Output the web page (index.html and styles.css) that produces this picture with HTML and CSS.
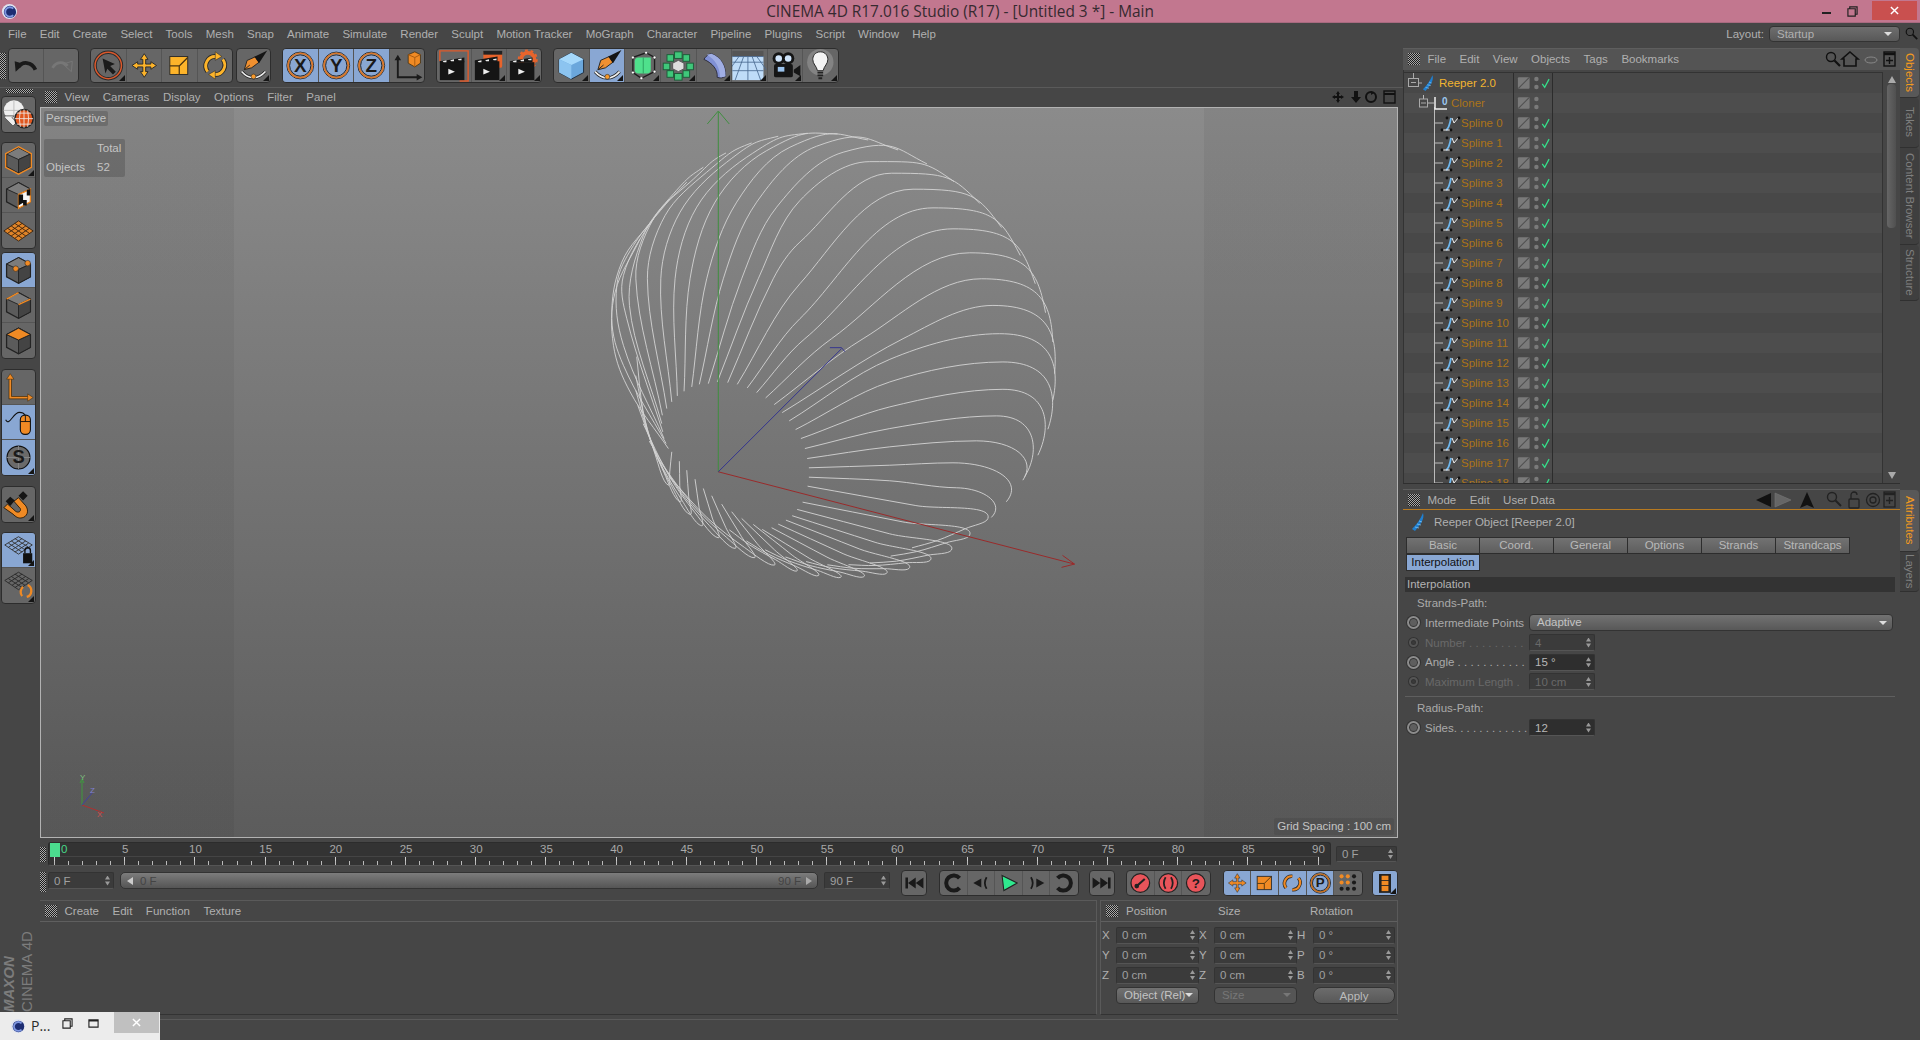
FILE: index.html
```html
<!DOCTYPE html>
<html lang="en">
<head>
<meta charset="utf-8">
<title>CINEMA 4D</title>
<link rel="stylesheet" href="styles.css">
</head>
<body>
<svg class="defs" aria-hidden="true">
<defs>
<symbol id="logo" viewBox="0 0 18 18"><circle cx="9" cy="9" r="8" fill="#dfe4f2"/><circle cx="9.5" cy="9.5" r="6.5" fill="#1d2d72"/><path d="M13 6a5 5 0 1 0 0 7" fill="none" stroke="#7f97e0" stroke-width="2"/></symbol>
<symbol id="undo" viewBox="0 0 36 35"><path d="M7 24 6 13l10 3z" fill="#1a1a1a"/><path d="M10 19c4-6 14-6 18 3" fill="none" stroke="#1a1a1a" stroke-width="4"/></symbol>
<symbol id="redo" viewBox="0 0 36 35"><path d="M29 24l1-11-10 3z" fill="none" stroke="#777"/><path d="M25 18c-4-5-12-5-16 2" fill="none" stroke="#777" stroke-width="3"/></symbol>
<symbol id="sel" viewBox="0 0 36 35"><circle cx="18" cy="17.5" r="14" fill="none" stroke="#2a2a2a" stroke-width="3.6"/><circle cx="18" cy="17.5" r="14" fill="none" stroke="#d9582c" stroke-width="1.6"/><path d="M12 10l13 6-5 2 6 6-3 3-6-6-2 5z" fill="#1a1a1a"/></symbol>
<symbol id="mov" viewBox="0 0 36 35"><path d="M18 5l4 6h-2.500v5H25v-2.500l6 4-6 4V19h-5.500v5H22l-4 6-4-6h2.500v-5H11v2.500l-6-4 6-4V16h5.500v-5H14z" fill="#fdb42a" stroke="#2a2a2a" stroke-width="1"/></symbol>
<symbol id="scl" viewBox="0 0 36 35"><rect x="8" y="8" width="19" height="19" fill="#fdb42a" stroke="#2a2a2a"/><path d="M8 18h10v9M18 18l9-9" fill="none" stroke="#4a3410" stroke-width="1.300"/></symbol>
<symbol id="rot" viewBox="0 0 36 35"><g fill="none" stroke="#2a2a2a" stroke-width="5"><path d="M10 24a10 10 0 0 1 9-16"/><path d="M26 11a10 10 0 0 1-9 16"/></g><g fill="none" stroke="#fdb42a" stroke-width="3"><path d="M10 24a10 10 0 0 1 9-16"/><path d="M26 11a10 10 0 0 1-9 16"/></g><path d="M18 3l7 5-7 4zM18 32l-7-5 7-4z" fill="#fdb42a" stroke="#2a2a2a" stroke-width=".6"/></symbol>
<symbol id="pen" viewBox="0 0 36 35"><path d="M5 24c8 9 18 9 26 0" fill="none" stroke="#222" stroke-width="3.400"/><path d="M5 24c8 9 18 9 26 0" fill="none" stroke="#eee" stroke-width="1.800"/><circle cx="18" cy="29.500" r="2.600" fill="#f79a2c" stroke="#222" stroke-width=".6"/><path d="M8 22 11 12l9-4 4 6-8 6z" fill="#f09030" stroke="#222"/><path d="M8 22l6-5" stroke="#222"/><path d="M19 8l14-7-9 14z" fill="#151515"/></symbol>
<symbol id="lx" viewBox="0 0 36 35"><circle cx="18" cy="17.500" r="14.200" fill="none" stroke="#222"/><circle cx="18" cy="17.500" r="12.800" fill="none" stroke="#d9782a" stroke-width="2"/><circle cx="18" cy="17.500" r="11.300" fill="none" stroke="#222"/><text x="18" y="24" class="big">X</text></symbol>
<symbol id="ly" viewBox="0 0 36 35"><circle cx="18" cy="17.500" r="14.200" fill="none" stroke="#222"/><circle cx="18" cy="17.500" r="12.800" fill="none" stroke="#d9782a" stroke-width="2"/><circle cx="18" cy="17.500" r="11.300" fill="none" stroke="#222"/><text x="18" y="24" class="big">Y</text></symbol>
<symbol id="lz" viewBox="0 0 36 35"><circle cx="18" cy="17.500" r="14.200" fill="none" stroke="#222"/><circle cx="18" cy="17.500" r="12.800" fill="none" stroke="#d9782a" stroke-width="2"/><circle cx="18" cy="17.500" r="11.300" fill="none" stroke="#222"/><text x="18" y="24" class="big">Z</text></symbol>
<symbol id="crd" viewBox="0 0 36 35"><path d="M8 10v20h22" fill="none" stroke="#1a1a1a" stroke-width="2"/><path d="M8 6l3.500 6h-7zM34 30l-6-3.500v7z" fill="#1a1a1a"/><path d="M26 3l6 3v9l-6 4-7-4V6z" fill="#f08a24" stroke="#3a2a10" stroke-width=".8"/><path d="M19 6l7 3 6-3M26 9v10" fill="none" stroke="#a85a10"/></symbol>
<symbol id="rv" viewBox="0 0 36 35"><path d="M3 13V2h30v32h-9" fill="none" stroke="#e05a2a" stroke-width="1.500"/><rect x="3" y="13" width="26" height="20" fill="#151515"/><path d="M3 13 29 9v5H3z" fill="#151515"/><path d="M6 13l4-1v2H7zM14 12l4-1v2h-3zM22 11l4-1v2h-3z" fill="#eee"/><path d="M12 21l7 3-7 3z" fill="#eee"/></symbol>
<symbol id="rp" viewBox="0 0 36 35"><rect x="12" y="2" width="20" height="18" rx="2" fill="#e8642c"/><rect x="12" y="2" width="20" height="4" fill="#222"/><rect x="3" y="13" width="26" height="20" fill="#151515"/><path d="M3 12 27 8v6H3z" fill="#151515"/><path d="M6 13l4-1v2H7zM14 12l4-1v2h-3zM22 11l4-1v2h-3z" fill="#eee"/><path d="M12 21l7 3-7 3z" fill="#eee"/></symbol>
<symbol id="rs" viewBox="0 0 36 35"><circle cx="22" cy="11" r="7" fill="none" stroke="#e8642c" stroke-width="4"/><circle cx="22" cy="11" r="9.600" fill="none" stroke="#e8642c" stroke-width="2" stroke-dasharray="3 3"/><rect x="3" y="14" width="26" height="19" fill="#151515"/><path d="M3 13 27 9v5H3z" fill="#151515"/><path d="M6 13l4-1v2H7zM14 12l4-1v2h-3zM22 11l4-1v2h-3z" fill="#eee"/><path d="M12 21l7 3-7 3z" fill="#eee"/></symbol>
<symbol id="bcube" viewBox="0 0 36 35"><path d="M18 4l13 7v14l-13 7-13-7V11z" fill="#6ba7dc" stroke="#1f2d3d"/><path d="M18 4l13 7-13 6-13-6z" fill="#a5d8fb"/><path d="M5 11l13 6v15l-13-7z" fill="#8cc4f0"/></symbol>
<symbol id="gcube" viewBox="0 0 36 35"><path d="M8 9l14-5 9 5v15l-14 7-9-6z" fill="none" stroke="#1d1d1d" stroke-width="1.400"/><path d="M10 13q0-4 4-4h13v13q0 4-4 4H14q-4 0-4-4z" fill="#4fe08c"/><path d="M19 9v17" stroke="#2aa060"/><g fill="#fff" stroke="#222" stroke-width=".5"><circle cx="8" cy="9" r="1.500"/><circle cx="22" cy="4" r="1.500"/><circle cx="31" cy="9" r="1.500"/><circle cx="31" cy="24" r="1.500"/><circle cx="17" cy="31" r="1.500"/><circle cx="8" cy="25" r="1.500"/></g></symbol>
<symbol id="clon" viewBox="0 0 36 35"><g fill="#3fc77a" stroke="#1d5a38"><rect x="14" y="3" width="8" height="7"/><rect x="23" y="6" width="7" height="7"/><rect x="27" y="15" width="7" height="7"/><rect x="23" y="23" width="7" height="7"/><rect x="14" y="26" width="8" height="7"/><rect x="6" y="23" width="7" height="7"/><rect x="2" y="15" width="7" height="7"/><rect x="6" y="6" width="7" height="7"/></g><path d="M18 12l6 3v6l-6 3-6-3v-6z" fill="#ddd" stroke="#555"/></symbol>
<symbol id="bent" viewBox="0 0 36 35"><path d="M7 11c3-5 7-6 8-6 10 4 15 12 15 24-3 2-6 2-9 1 1-8-5-15-14-19z" fill="#8090d4" stroke="#2a2a3a"/><path d="M15 5c10 4 15 12 15 24-2 1-4 1-6 1 0-11-5-19-14-24z" fill="#a0aee4"/></symbol>
<symbol id="floor" viewBox="0 0 36 35"><rect width="33" height="7" y="2" fill="#555"/><rect y="8" width="33" height="25" fill="#bfdcf8"/><path d="M0 8h33M0 14h33M0 23h33M16.500 8v25M12 8 3 33M21 8l9 25M7 8-3 22M26 8l10 14" stroke="#4a6a90" stroke-width=".9" fill="none"/></symbol>
<symbol id="cam" viewBox="0 0 36 35"><rect x="6" y="16" width="20" height="14" rx="2" fill="#151515"/><circle cx="11" cy="10" r="6.500" fill="#151515"/><circle cx="21" cy="10" r="6.500" fill="#151515"/><circle cx="11" cy="10" r="3.500" fill="#cfe4fa"/><circle cx="21" cy="10" r="3.500" fill="#cfe4fa"/><rect x="10" y="19" width="7" height="5" fill="#9cc4ee"/><path d="M27 22l7-5v12l-7-4z" fill="#151515"/></symbol>
<symbol id="bulb" viewBox="0 0 36 35"><circle cx="18" cy="14" r="14" fill="#a0a0a0" opacity=".5"/><path d="M18 3c-6 0-8 5-8 8 0 5 4 7 5 12h6c1-5 5-7 5-12 0-3-2-8-8-8z" fill="#f4f4f4" stroke="#222"/><path d="M15 25h6M15 28h6M16 31h4" stroke="#222" stroke-width="2"/></symbol>
<symbol id="world" viewBox="0 0 36 35"><circle cx="13" cy="13" r="11" fill="#eee"/><path d="M13 2v22M2 13h22" stroke="#bbb"/><path d="M3 21l9 9 4-4-5-5 2-2H3z" fill="#eee" stroke="#555"/><circle cx="24" cy="22" r="10" fill="#e0561e" stroke="#222" stroke-width="1.500"/><path d="M14 22h20M24 12v20M16 16h16M16 28h16M20 13q-2 9 0 18M28 13q2 9 0 18" stroke="#eee" fill="none" stroke-width=".9"/></symbol>
<symbol id="cu" viewBox="0 0 36 35"><path d="M18 4l13 7v14l-13 7-13-7V11z" fill="#5b5b5b" stroke="#222" stroke-width="1.400"/><path d="M18 4l13 7-13 6-13-6z" fill="#7c7c7c" stroke="#222"/><path d="M18 17v15l13-7V11z" fill="#444" stroke="#222"/></symbol>
<symbol id="cm" viewBox="0 0 36 35"><use href="#cu"/><path d="M18 3l14 7.500v15L18 33 4 25.500v-15z" fill="none" stroke="#f08a24" stroke-width="1.500"/></symbol>
<symbol id="ct" viewBox="0 0 36 35"><use href="#cu"/><path d="M18 17v15l13-7V11z" fill="#f7f7f7" stroke="#f08a24" stroke-width="1.500"/><path d="M18 17h5v6h-5zM23 23h4v6h-4zM27 12l4-1v7h-4zM18 29l5-3v-3h-5z" fill="#111"/></symbol>
<symbol id="wp" viewBox="0 0 36 35"><path d="M18 7 34 18 18 29 2 18z" fill="#e08428" stroke="#3a2410"/><path d="M10 12.500l16 11M14 9.700l16 11M6 15l16 11M26 12.500l-16 11M22 9.700l-16 11M30 15 14 26" stroke="#3a2410"/></symbol>
<symbol id="cp" viewBox="0 0 36 35"><use href="#cu"/><circle cx="15" cy="16" r="3" fill="#f08a24" stroke="#222" stroke-width=".6"/><circle cx="28" cy="10" r="3" fill="#f08a24" stroke="#222" stroke-width=".6"/></symbol>
<symbol id="ce" viewBox="0 0 36 35"><use href="#cu"/><path d="M5 11l13-7M18 17l13-6" stroke="#f08a24" stroke-width="1.600"/></symbol>
<symbol id="cf" viewBox="0 0 36 35"><use href="#cu"/><path d="M18 4l13 7-13 6-13-6z" fill="#f08a24" stroke="#222"/></symbol>
<symbol id="axis" viewBox="0 0 36 35"><path d="M9 8v21h21" fill="none" stroke="#3a2a10" stroke-width="3.500"/><path d="M9 8v21h21" fill="none" stroke="#f08a24" stroke-width="2"/><path d="M9 3l4 6H5zM34 29l-6 4v-8z" fill="#f08a24" stroke="#3a2a10" stroke-width=".6"/></symbol>
<symbol id="mouse" viewBox="0 0 36 35"><path d="M4 15c4 8 8-8 15-8 3 0 5 1 6 3" fill="none" stroke="#111" stroke-width="1.200"/><rect x="20" y="10" width="11" height="21" rx="5" fill="#f08a24" stroke="#111" stroke-width="1.200"/><path d="M20 17h11M25.500 10v7" stroke="#111"/></symbol>
<symbol id="snap" viewBox="0 0 36 35"><circle cx="18" cy="17.500" r="12.500" fill="#6a6a6a" stroke="#111" stroke-width="1.300"/><path d="M18 5v25M5 17.500h26" stroke="#888"/><text x="18" y="24" class="big">S</text></symbol>
<symbol id="mag" viewBox="0 0 36 35"><path d="M6 17l9 8c3 2 6 0 5-3l-7-8 5-4 8 9c4 6 1 12-4 13-4 1-7-1-10-4l-10-7z" fill="#f08a24" stroke="#2a1a08"/><path d="M4 14l5-5 5 4-5 6zM18 8l5-5 5 5-5 5z" fill="#151515"/></symbol>
<symbol id="gl" viewBox="0 0 36 35"><path d="M18 3 33 12 18 22 3 12z" fill="none" stroke="#333"/><path d="M10 7.500l15 9.700M14 5l15 9.500M7 10l15 9.800M26 7.500l-15 9.700M22 5 7 14.500M29 10l-15 9.800" stroke="#333"/><rect x="23" y="21" width="10" height="11" fill="#111"/><path d="M25 21v-3a3 3 0 0 1 6 0v3" fill="none" stroke="#111" stroke-width="1.500"/></symbol>
<symbol id="gr" viewBox="0 0 36 35"><path d="M18 3 33 12 18 22 3 12z" fill="none" stroke="#2a2a2a"/><path d="M10 7.500l15 9.700M14 5l15 9.500M7 10l15 9.800M26 7.500l-15 9.700M22 5 7 14.500M29 10l-15 9.800" stroke="#2a2a2a"/><path d="M22 29a7 7 0 0 1 1-10M28 17a7 7 0 0 1-1 13" fill="none" stroke="#f08a24" stroke-width="2.500"/></symbol>
<symbol id="tst" viewBox="0 0 28 27"><path d="M4 7h3v13H4zM16 7v13L7 13.500zM25 7v13l-9-6.500z" fill="#1a1a1a"/></symbol>
<symbol id="tc" viewBox="0 0 28 27"><path d="M21 19a8.500 8.500 0 1 1 0-11" fill="none" stroke="#1a1a1a" stroke-width="4.500"/></symbol>
<symbol id="tp" viewBox="0 0 28 27"><path d="M5 13.500l9-5v10z" fill="#1a1a1a"/><path d="M20 7q-4 6.500 0 13" fill="none" stroke="#1a1a1a" stroke-width="2"/></symbol>
<symbol id="tpl" viewBox="0 0 28 27"><path d="M7 5l17 8.500L9 22z" fill="#2fe88e" stroke="#222" stroke-width="1.200"/></symbol>
<symbol id="tn" viewBox="0 0 28 27"><path d="M23 13.500l-9-5v10z" fill="#1a1a1a"/><path d="M8 7q4 6.500 0 13" fill="none" stroke="#1a1a1a" stroke-width="2"/></symbol>
<symbol id="td" viewBox="0 0 28 27"><path d="M7 19a8.500 8.500 0 1 0 0-11" fill="none" stroke="#1a1a1a" stroke-width="4.500"/></symbol>
<symbol id="ten" viewBox="0 0 28 27"><path d="M24 7h-3v13h3zM12 7v13l9-6.500zM3 7v13l9-6.500z" fill="#1a1a1a"/></symbol>
<symbol id="rk" viewBox="0 0 28 27"><circle cx="14" cy="13.500" r="10.500" fill="#e8545a" stroke="#222" stroke-width="1.400"/><circle cx="10" cy="17" r="2.600" fill="#222"/><path d="M11 16l8-7" stroke="#222" stroke-width="2.400"/></symbol>
<symbol id="ra" viewBox="0 0 28 27"><circle cx="14" cy="13.500" r="10.500" fill="#e8545a" stroke="#222" stroke-width="1.400"/><path d="M11 7q-4 6.500 0 13M17 7q4 6.500 0 13" fill="none" stroke="#222" stroke-width="2"/></symbol>
<symbol id="rq" viewBox="0 0 28 27"><circle cx="14" cy="13.500" r="10.500" fill="#e8545a" stroke="#222" stroke-width="1.400"/><text x="14" y="19" class="mid">?</text></symbol>
<symbol id="m1" viewBox="0 0 28 27"><path d="M14 3l3 5h-2v4h4v-2l5 3.500-5 3.500v-2h-4v4h2l-3 5-3-5h2v-4H9v2l-5-3.500L9 10v2h4V8h-2z" fill="#f08a24" stroke="#2a2a2a" stroke-width=".6"/></symbol>
<symbol id="m2" viewBox="0 0 28 27"><rect x="6" y="6" width="16" height="15" fill="#f08a24" stroke="#2a2a2a"/><path d="M6 14h8v7M14 14l8-8" fill="none" stroke="#4a3410"/></symbol>
<symbol id="m3" viewBox="0 0 28 27"><g fill="none" stroke="#2a2a2a" stroke-width="4"><path d="M7 19a8 8 0 0 1 7-13M21 8a8 8 0 0 1-7 13"/></g><g fill="none" stroke="#f08a24" stroke-width="2.400"><path d="M7 19a8 8 0 0 1 7-13M21 8a8 8 0 0 1-7 13"/></g></symbol>
<symbol id="mp" viewBox="0 0 28 27"><circle cx="14" cy="13.500" r="11.500" fill="none" stroke="#222"/><circle cx="14" cy="13.500" r="10.200" fill="none" stroke="#c8701e" stroke-width="1.800"/><circle cx="14" cy="13.500" r="8.800" fill="none" stroke="#222"/><text x="14" y="18.500" class="mid">P</text></symbol>
<symbol id="md" viewBox="0 0 28 27"><g fill="#f08a24"><circle cx="7" cy="6" r="2.300"/><circle cx="14" cy="6" r="2.300"/><circle cx="7" cy="13" r="2.300"/><circle cx="14" cy="13" r="2.300"/></g><g fill="#1a1a1a"><circle cx="21" cy="6" r="2.300"/><circle cx="21" cy="13" r="2.300"/><circle cx="7" cy="20" r="2.300"/><circle cx="14" cy="20" r="2.300"/><circle cx="21" cy="20" r="2.300"/></g></symbol>
<symbol id="film" viewBox="0 0 28 27"><rect x="7" y="3" width="14" height="22" fill="#222"/><rect x="10" y="5" width="8" height="5" fill="#f08a24"/><rect x="10" y="11" width="8" height="5" fill="#f08a24"/><rect x="10" y="17" width="8" height="6" fill="#f08a24"/></symbol>
<symbol id="reep" viewBox="0 0 16 20"><path d="M12 1c2 6-3 12-8 18l-3-2c4-4 8-9 11-16z" fill="#1f7fd0"/><path d="M4 15l4 1M6 12l4 1M8 9l3 1" stroke="#7fc4f0" stroke-width=".8"/></symbol>
<symbol id="mg" viewBox="0 0 16 16"><circle cx="6" cy="6" r="4.500" fill="none" stroke="#111" stroke-width="1.400"/><path d="M9.500 9.500 15 15" stroke="#111" stroke-width="2.200"/></symbol>
<symbol id="fl" viewBox="0 0 39 20"><rect x="4" y="4" width="12" height="12" rx="1" fill="#7a7a7a"/><path d="M4.500 15.500 15.500 4.500" stroke="#505050" stroke-width="1.200"/><circle cx="23" cy="6" r="2.300" fill="#7a7a7a"/><circle cx="23" cy="14" r="2.300" fill="#7a7a7a"/><path d="M29 11l2.500 3.500L36 6" fill="none" stroke="#35e08a" stroke-width="1.300"/></symbol>
<symbol id="fn" viewBox="0 0 39 20"><rect x="4" y="4" width="12" height="12" rx="1" fill="#7a7a7a"/><path d="M4.500 15.500 15.500 4.500" stroke="#505050" stroke-width="1.200"/><circle cx="23" cy="6" r="2.300" fill="#7a7a7a"/><circle cx="23" cy="14" r="2.300" fill="#7a7a7a"/></symbol>
<symbol id="t0" viewBox="0 0 18 20"><path d="M9.500 0v5M15 10h3" stroke="#aaa"/><rect x="4.500" y="5.500" width="10" height="8" fill="#464646" stroke="#aaa"/><path d="M7 9.500h5" stroke="#aaa"/></symbol>
<symbol id="t1" viewBox="0 0 60 20"><path d="M30 10H24" stroke="#bbb"/><path d="M19.500 2v4M30.500 14v6" stroke="#bbb"/><rect x="15.500" y="6" width="8" height="8" fill="#464646" stroke="#aaa"/><path d="M17 10h5" stroke="#aaa"/><path d="M31 4v12h12" fill="none" stroke="#eee" stroke-width="1.500"/><text x="38" y="12" class="zero">0</text></symbol>
<symbol id="t2" viewBox="0 0 60 20"><path d="M30.500 0v20M30 10h9" stroke="#bbb"/><path d="M42 17q3-1 5-12" fill="none" stroke="#6fb8ee" stroke-width="1.800"/><path d="M48 5l2 5 4-5M39 17h7" fill="none" stroke="#eee"/><g fill="#111"><circle cx="43" cy="5" r="1.400"/><circle cx="55" cy="5" r="1.400"/><circle cx="38" cy="17" r="1.400"/><circle cx="47" cy="17" r="1.400"/></g></symbol>
</defs>
</svg>

<header class="title">
  <div class="title-l"><svg class="logo"><use href="#logo"/></svg></div>
  <div class="title-t">CINEMA 4D R17.016 Studio (R17) - [Untitled 3 *] - Main</div>
  <div class="win">
    <span class="wmin"></span>
    <svg class="wres" viewBox="0 0 12 12"><path d="M3 3V1h8v8H9M1 3h8v8H1z" fill="none" stroke="#222" stroke-width="1.300"/></svg>
    <span class="wclose"><svg class="wx" viewBox="0 0 10 10"><path d="M1 1l8 8M9 1 1 9" stroke="#fff" stroke-width="1.600"/></svg></span>
  </div>
</header>
<nav class="menu">
  <div class="menu-items">
    <span>File</span><span>Edit</span><span>Create</span><span>Select</span><span>Tools</span><span>Mesh</span><span>Snap</span><span>Animate</span><span>Simulate</span><span>Render</span><span>Sculpt</span><span>Motion Tracker</span><span>MoGraph</span><span>Character</span><span>Pipeline</span><span>Plugins</span><span>Script</span><span>Window</span><span>Help</span>
  </div>
  <div class="layout"><span>Layout:</span><div class="lay-dd"><span>Startup</span><i class="down"></i></div><svg class="ic16 gmg"><use href="#mg"/></svg></div>
</nav>
<div class="body">
  <div class="work">
    <div class="toolbar">
      <i class="grip gv"></i>
      <div class="grp w2"><b class="btn"><svg><use href="#undo"/></svg></b><b class="btn"><svg><use href="#redo"/></svg></b></div>
      <div class="grp w4 g1"><b class="btn c"><svg><use href="#sel"/></svg></b><b class="btn"><svg><use href="#mov"/></svg></b><b class="btn"><svg><use href="#scl"/></svg></b><b class="btn"><svg><use href="#rot"/></svg></b></div>
      <div class="grp w1 g2"><b class="btn c"><svg><use href="#pen"/></svg></b></div>
      <div class="grp w4 g1"><b class="btn on"><svg><use href="#lx"/></svg></b><b class="btn on"><svg><use href="#ly"/></svg></b><b class="btn on"><svg><use href="#lz"/></svg></b><b class="btn"><svg><use href="#crd"/></svg></b></div>
      <div class="grp w3 g1"><b class="btn"><svg><use href="#rv"/></svg></b><b class="btn c"><svg><use href="#rp"/></svg></b><b class="btn c"><svg><use href="#rs"/></svg></b></div>
      <div class="grp w8 g1"><b class="btn c"><svg><use href="#bcube"/></svg></b><b class="btn on c"><svg><use href="#pen"/></svg></b><b class="btn c"><svg><use href="#gcube"/></svg></b><b class="btn c"><svg><use href="#clon"/></svg></b><b class="btn c"><svg><use href="#bent"/></svg></b><b class="btn c"><svg><use href="#floor"/></svg></b><b class="btn c"><svg><use href="#cam"/></svg></b><b class="btn c"><svg><use href="#bulb"/></svg></b></div>
    </div>
    <div class="lower">
      <aside class="left">
        <i class="grip gh"></i>
        <div class="vgrp"><b class="vb"><svg><use href="#world"/></svg></b></div>
        <div class="vgrp m9"><b class="vb c"><svg><use href="#cm"/></svg></b><b class="vb"><svg><use href="#ct"/></svg></b><b class="vb"><svg><use href="#wp"/></svg></b></div>
        <div class="vgrp m3"><b class="vb on"><svg><use href="#cp"/></svg></b><b class="vb"><svg><use href="#ce"/></svg></b><b class="vb"><svg><use href="#cf"/></svg></b></div>
        <div class="vgrp m10"><b class="vb"><svg><use href="#axis"/></svg></b><b class="vb on"><svg><use href="#mouse"/></svg></b><b class="vb on c"><svg><use href="#snap"/></svg></b></div>
        <div class="vgrp m10"><b class="vb c"><svg><use href="#mag"/></svg></b></div>
        <div class="vgrp m9"><b class="vb on c"><svg><use href="#gl"/></svg></b><b class="vb c"><svg><use href="#gr"/></svg></b></div>
        <div class="maxon"><span class="mx1">MAXON</span><span class="mx2">CINEMA 4D</span></div>
      </aside>
      <main class="center">
        <div class="phead vh"><i class="grip gm"></i><span>View</span><span>Cameras</span><span>Display</span><span>Options</span><span>Filter</span><span>Panel</span>
          <svg class="vnav" viewBox="0 0 66 16"><path d="M7 2l2 3H8v2h2V6l3 2-3 2V9H8v2h1l-2 3-2-3h1V9H4v1L1 8l3-2v1h2V5H5z" fill="#111"/><path d="M23 2h4v6h3l-5 6-5-6h3z" fill="#111"/><circle cx="40" cy="8" r="5" fill="none" stroke="#111" stroke-width="2"/><path d="M40 2l3 2-3 2z" fill="#111"/><rect x="53" y="2" width="11" height="12" fill="none" stroke="#111" stroke-width="1.400"/><path d="M53 5h11" stroke="#111" stroke-width="2"/></svg>
        </div>
        <section class="vp">
          <svg id="scene" class="scene" viewBox="0 0 1358 730"></svg>
          <div class="hud">Perspective</div>
          <div class="stats"><div class="st-r"><span></span><span>Total</span></div><div class="st-r"><span>Objects</span><span>52</span></div></div>
          <svg class="mini" viewBox="0 0 40 45"><path d="M16 32V8" stroke="#3f9a3f"/><path d="M14 10l2-4 2 4" stroke="#3f9a3f" fill="none"/><path d="M16 32l22 8" stroke="#b03030"/><path d="M16 32l10-12" stroke="#4040a0"/><text x="14" y="7" class="mt mg1">Y</text><text x="24" y="20" class="mt mb1">Z</text><text x="31" y="44" class="mt mr1">X</text></svg>
          <div class="grid-sp">Grid Spacing : 100 cm</div>
        </section>
        <div class="tl">
          <i class="grip gt"></i>
          <div class="ruler">
            <i class="mark"></i>
            <div class="nums"><span class="n0">0</span><span>5</span><span>10</span><span>15</span><span>20</span><span>25</span><span>30</span><span>35</span><span>40</span><span>45</span><span>50</span><span>55</span><span>60</span><span>65</span><span>70</span><span>75</span><span>80</span><span>85</span><span>90</span></div>
            <div class="ticks"></div>
          </div>
          <div class="fld f60 tlf"><span>0 F</span></div>
        </div>
        <div class="ctl">
          <i class="grip gt2"></i>
          <div class="fld f66"><span>0 F</span></div>
          <div class="slider"><i class="sl-l"></i><span class="s0">0 F</span><span class="s90">90 F</span><i class="sl-r"></i></div>
          <div class="fld f66"><span>90 F</span></div>
          <div class="tg ml11"><b class="tb s1"><svg><use href="#tst"/></svg></b></div>
          <div class="tg ml12"><b class="tb"><svg><use href="#tc"/></svg></b><b class="tb"><svg><use href="#tp"/></svg></b><b class="tb"><svg><use href="#tpl"/></svg></b><b class="tb"><svg><use href="#tn"/></svg></b><b class="tb"><svg><use href="#td"/></svg></b></div>
          <div class="tg ml10"><b class="tb s1"><svg><use href="#ten"/></svg></b></div>
          <div class="tg ml11"><b class="tb"><svg><use href="#rk"/></svg></b><b class="tb"><svg><use href="#ra"/></svg></b><b class="tb"><svg><use href="#rq"/></svg></b></div>
          <div class="tg ml12"><b class="tb on"><svg><use href="#m1"/></svg></b><b class="tb on"><svg><use href="#m2"/></svg></b><b class="tb on"><svg><use href="#m3"/></svg></b><b class="tb on"><svg><use href="#mp"/></svg></b><b class="tb"><svg><use href="#md"/></svg></b></div>
          <div class="tg ml9"><b class="tb on c s1"><svg><use href="#film"/></svg></b></div>
        </div>
        <div class="bot">
          <div class="mat"><div class="phead mh"><i class="grip gm"></i><span>Create</span><span>Edit</span><span>Function</span><span>Texture</span></div></div>
          <div class="coord">
            <div class="phead ch"><i class="grip gm"></i><span class="c-p">Position</span><span class="c-s">Size</span><span class="c-r">Rotation</span></div>
            <div class="c-grid">
              <span>X</span><div class="fld"><span>0 cm</span></div><span>X</span><div class="fld"><span>0 cm</span></div><span>H</span><div class="fld"><span>0 °</span></div>
              <span>Y</span><div class="fld"><span>0 cm</span></div><span>Y</span><div class="fld"><span>0 cm</span></div><span>P</span><div class="fld"><span>0 °</span></div>
              <span>Z</span><div class="fld"><span>0 cm</span></div><span>Z</span><div class="fld"><span>0 cm</span></div><span>B</span><div class="fld"><span>0 °</span></div>
              <span></span><div class="dd"><span>Object (Rel)</span><i class="down"></i></div><span></span><div class="dd off"><span>Size</span><i class="down"></i></div><span></span><div class="apply">Apply</div>
            </div>
          </div>
        </div>
        <div class="status"></div>
      </main>
    </div>
  </div>
  <div class="side">
    <div class="side-main">
      <section class="om">
        <div class="phead omh"><i class="grip gm"></i><span>File</span><span>Edit</span><span>View</span><span>Objects</span><span>Tags</span><span>Bookmarks</span>
          <svg class="omi" viewBox="0 0 72 16"><circle cx="6" cy="6" r="4.500" fill="none" stroke="#111" stroke-width="1.400"/><path d="M9.500 9.500 15 15" stroke="#111" stroke-width="2.200"/><path d="M25 1l8 7h-2v7h-12V8h-2z" fill="#555" stroke="#111" stroke-width="1.600"/><ellipse cx="46" cy="9" rx="6" ry="3" fill="none" stroke="#888"/><rect x="59" y="1" width="11" height="14" fill="none" stroke="#111" stroke-width="1.400"/><path d="M59 3h11" stroke="#111" stroke-width="2.400"/><path d="M64.500 6v7M61 9.500h7" stroke="#111" stroke-width="1.400"/></svg>
        </div>
        <div class="om-body">
          <div class="list">
            <div class="row"><div class="nc"><svg class="tw"><use href="#t0"/></svg><svg class="ri rr"><use href="#reep"/></svg><span class="hi">Reeper 2.0</span></div><svg class="fc"><use href="#fl"/></svg></div>
            <div class="row"><div class="nc"><svg class="tt"><use href="#t1"/></svg><span class="nm n1">Cloner</span></div><svg class="fc"><use href="#fn"/></svg></div>
            <div class="row"><div class="nc"><svg class="tt"><use href="#t2"/></svg><span class="nm">Spline 0</span></div><svg class="fc"><use href="#fl"/></svg></div>
            <div class="row"><div class="nc"><svg class="tt"><use href="#t2"/></svg><span class="nm">Spline 1</span></div><svg class="fc"><use href="#fl"/></svg></div>
            <div class="row"><div class="nc"><svg class="tt"><use href="#t2"/></svg><span class="nm">Spline 2</span></div><svg class="fc"><use href="#fl"/></svg></div>
            <div class="row"><div class="nc"><svg class="tt"><use href="#t2"/></svg><span class="nm">Spline 3</span></div><svg class="fc"><use href="#fl"/></svg></div>
            <div class="row"><div class="nc"><svg class="tt"><use href="#t2"/></svg><span class="nm">Spline 4</span></div><svg class="fc"><use href="#fl"/></svg></div>
            <div class="row"><div class="nc"><svg class="tt"><use href="#t2"/></svg><span class="nm">Spline 5</span></div><svg class="fc"><use href="#fl"/></svg></div>
            <div class="row"><div class="nc"><svg class="tt"><use href="#t2"/></svg><span class="nm">Spline 6</span></div><svg class="fc"><use href="#fl"/></svg></div>
            <div class="row"><div class="nc"><svg class="tt"><use href="#t2"/></svg><span class="nm">Spline 7</span></div><svg class="fc"><use href="#fl"/></svg></div>
            <div class="row"><div class="nc"><svg class="tt"><use href="#t2"/></svg><span class="nm">Spline 8</span></div><svg class="fc"><use href="#fl"/></svg></div>
            <div class="row"><div class="nc"><svg class="tt"><use href="#t2"/></svg><span class="nm">Spline 9</span></div><svg class="fc"><use href="#fl"/></svg></div>
            <div class="row"><div class="nc"><svg class="tt"><use href="#t2"/></svg><span class="nm">Spline 10</span></div><svg class="fc"><use href="#fl"/></svg></div>
            <div class="row"><div class="nc"><svg class="tt"><use href="#t2"/></svg><span class="nm">Spline 11</span></div><svg class="fc"><use href="#fl"/></svg></div>
            <div class="row"><div class="nc"><svg class="tt"><use href="#t2"/></svg><span class="nm">Spline 12</span></div><svg class="fc"><use href="#fl"/></svg></div>
            <div class="row"><div class="nc"><svg class="tt"><use href="#t2"/></svg><span class="nm">Spline 13</span></div><svg class="fc"><use href="#fl"/></svg></div>
            <div class="row"><div class="nc"><svg class="tt"><use href="#t2"/></svg><span class="nm">Spline 14</span></div><svg class="fc"><use href="#fl"/></svg></div>
            <div class="row"><div class="nc"><svg class="tt"><use href="#t2"/></svg><span class="nm">Spline 15</span></div><svg class="fc"><use href="#fl"/></svg></div>
            <div class="row"><div class="nc"><svg class="tt"><use href="#t2"/></svg><span class="nm">Spline 16</span></div><svg class="fc"><use href="#fl"/></svg></div>
            <div class="row"><div class="nc"><svg class="tt"><use href="#t2"/></svg><span class="nm">Spline 17</span></div><svg class="fc"><use href="#fl"/></svg></div>
            <div class="row"><div class="nc"><svg class="tt"><use href="#t2"/></svg><span class="nm">Spline 18</span></div><svg class="fc"><use href="#fl"/></svg></div>
          </div>
          <div class="sbar"><i class="up"></i><div class="thumb"></div><i class="dn"></i></div>
        </div>
      </section>
      <section class="am">
        <div class="phead amh"><i class="grip gm"></i><span>Mode</span><span>Edit</span><span>User Data</span>
          <svg class="ami" viewBox="0 0 140 18"><path d="M0 9l15-7v14z" fill="#111"/><path d="M35 9 19 2v14z" fill="#666" stroke="#777" stroke-width=".6"/><path d="M51 1l7 16-7-3-7 3z" fill="#111"/><circle cx="76" cy="6" r="4.500" fill="none" stroke="#222" stroke-width="1.400"/><path d="M79.500 9.500 85 15" stroke="#222" stroke-width="2"/><rect x="93" y="8" width="10" height="9" rx="1" fill="none" stroke="#222" stroke-width="1.300"/><path d="M95 8V4a3 3 0 0 1 6 0" fill="none" stroke="#222" stroke-width="1.300"/><circle cx="117" cy="9" r="6.500" fill="none" stroke="#222" stroke-width="1.300"/><circle cx="117" cy="9" r="3" fill="none" stroke="#222" stroke-width="1.300"/><rect x="128" y="1" width="11" height="15" fill="none" stroke="#222" stroke-width="1.300"/><path d="M128 3h11" stroke="#222" stroke-width="2.400"/><path d="M133.500 6v7M130 9.500h7" stroke="#222" stroke-width="1.400"/></svg>
        </div>
        <div class="am-title"><svg class="ri ra1"><use href="#reep"/></svg><span>Reeper Object [Reeper 2.0]</span></div>
        <div class="tabs"><b>Basic</b><b>Coord.</b><b>General</b><b>Options</b><b>Strands</b><b>Strandcaps</b><b class="act">Interpolation</b></div>
        <div class="sect">Interpolation</div>
        <div class="cap">Strands-Path:</div>
        <div class="ar"><i class="rad"></i><span class="lb">Intermediate Points</span><div class="dd wide"><span>Adaptive</span><i class="down"></i></div></div>
        <div class="ar dis"><i class="rad"></i><span class="lb">Number . . . . . . . . .</span><div class="fld f65"><span>4</span></div></div>
        <div class="ar"><i class="rad"></i><span class="lb">Angle . . . . . . . . . . .</span><div class="fld f65 dark"><span>15 °</span></div></div>
        <div class="ar dis"><i class="rad"></i><span class="lb">Maximum Length .</span><div class="fld f65"><span>10 cm</span></div></div>
        <hr class="sep">
        <div class="cap">Radius-Path:</div>
        <div class="ar"><i class="rad"></i><span class="lb">Sides. . . . . . . . . . . .</span><div class="fld f65 dark"><span>12</span></div></div>
      </section>
    </div>
    <div class="rtabs">
      <div class="rt-top">
        <span class="rt act h48">Objects</span><span class="rt h48">Takes</span><span class="rt h98">Content Browser</span><span class="rt h52">Structure</span>
      </div>
      <div class="rt-bot"><span class="rt act h62">Attributes</span><span class="rt h40">Layers</span></div>
    </div>
  </div>
</div>
<div class="task">
  <svg class="t-logo"><use href="#logo"/></svg><span class="t-name">P...</span>
  <svg class="t-i t-res" viewBox="0 0 12 12"><path d="M3 3V1h8v8H9M1 3h8v8H1z" fill="none" stroke="#222" stroke-width="1.200"/></svg>
  <svg class="t-i t-max" viewBox="0 0 12 12"><path d="M1 2h10v8H1z" fill="none" stroke="#222" stroke-width="1.200"/><path d="M1 3h10" stroke="#222" stroke-width="1.600"/></svg>
  <span class="t-close"><svg class="wx" viewBox="0 0 10 10"><path d="M1 1l8 8M9 1 1 9" stroke="#fff" stroke-width="1.600"/></svg></span>
</div>
<script src="script.js"></script>
</body>
</html>
```
FILE: styles.css
```css
* { box-sizing: border-box; }
html, body { margin: 0; padding: 0; }
body { width: 1920px; height: 1040px; overflow: hidden; background: #464646; color: #b0b0b0; font: 11.5px/16px "Liberation Sans", Arial, sans-serif; position: relative; }
i, b { display: block; font-style: normal; font-weight: normal; }
.defs { position: absolute; width: 0; height: 0; }
.big { font: bold 20px "Liberation Sans", sans-serif; fill: #1a1a1a; text-anchor: middle; }
.mid { font: bold 15px "Liberation Sans", sans-serif; fill: #1a1a1a; text-anchor: middle; }
.zero { font: bold 10px "Liberation Sans", sans-serif; fill: #9cc8f0; }

.title { height: 23px; background: #c2778f; border-bottom: 1px solid #a86a80; display: grid; grid-template-columns: 1fr auto 1fr; align-items: center; }
.logo { width: 17px; height: 17px; margin-left: 1px; display: block; }
.title-t { font: 15.4px/22px "Open Sans", sans-serif; color: #362a30; padding-top: 1px; }
.win { display: flex; justify-content: flex-end; align-items: center; height: 22px; }
.wmin { width: 9px; height: 2px; background: #222; margin: 3px 16px 0 0; }
.wres { width: 11px; height: 11px; margin-right: 14px; }
.wclose { width: 45px; height: 19px; margin: -3px 3px 0 0; background: #c9504f; display: flex; align-items: center; justify-content: center; }
.wx { width: 9px; height: 9px; display: block; }

.menu { height: 21px; display: flex; justify-content: space-between; align-items: center; }
.menu-items { display: flex; gap: 13.2px; padding-left: 8px; }
.layout { display: flex; align-items: center; margin-right: 2px; }
.lay-dd { width: 131px; height: 16px; margin: 0 5px; padding: 0 7px; border-radius: 4px; background: linear-gradient(#6e6e6e,#585858); border: 1px solid #333; display: flex; justify-content: space-between; align-items: center; line-height: 12px; }
.down { width: 0; height: 0; border: 4px solid transparent; border-top: 4px solid #ddd; border-bottom: 0; flex: none; }
.ic16 { width: 13px; height: 13px; }

.body { display: flex; height: 996px; }
.work { width: 1403px; flex: none; display: flex; flex-direction: column; }
.toolbar { height: 44px; display: flex; padding-top: 4px; position: relative; border-bottom: 1px solid #5a5a5a; }
.grp { height: 35px; display: flex; border: 1px solid #2d2d2d; border-radius: 4px; overflow: hidden; background: #666; flex: none; }
.w1 { width: 35px; } .w2 { width: 71px; } .w3 { width: 106px; } .w4 { width: 143px; } .w8 { width: 286px; }
.g1 { margin-left: 11px; } .g2 { margin-left: 3px; }
.btn { flex: 1; min-width: 0; position: relative; border-right: 1px solid #555; }
.btn:last-child { border-right: 0; }
.btn svg { width: 100%; height: 100%; display: block; }
.on { background: #89a7d3; }
.c::after { content: ""; position: absolute; right: 1px; bottom: 1px; width: 0; height: 0; border: 3px solid #151515; border-top-color: transparent; border-left-color: transparent; }
.grip { background: repeating-conic-gradient(#1c1c1c 0 25%, #a8a8a8 0 50%) 0 0 / 2px 2px; flex: none; }
.gv { width: 6px; height: 26px; margin: 5px 2px 0 0; }
.gh { width: 27px; height: 4px; margin: 1px 0 3px 5px; }
.gm { width: 12px; height: 12px; margin-right: -6px; }
.gt { width: 6px; height: 15px; margin: 5px 2px 0 0; }
.gt2 { width: 6px; height: 20px; margin: 2px 2px 0 0; }

.lower { flex: 1; display: flex; min-height: 0; }
.left { width: 40px; flex: none; display: flex; flex-direction: column; padding-left: 1px; }
.vgrp { width: 35px; border: 1px solid #2d2d2d; border-radius: 4px; overflow: hidden; background: #666; flex: none; }
.m9 { margin-top: 9px; } .m3 { margin-top: 3px; } .m10 { margin-top: 10px; }
.vb { height: 35px; position: relative; border-bottom: 1px solid #555; }
.vb:last-child { border-bottom: 0; }
.vb svg { width: 100%; height: 100%; display: block; }
.maxon { margin-top: auto; margin-bottom: 28px; margin-left: -1px; width: 36px; height: 84px; display: flex; flex-direction: column; writing-mode: vertical-rl; transform: rotate(180deg); align-items: flex-start; white-space: nowrap; }
.mx2 { font: 15px/18px "Liberation Sans", sans-serif; color: #7c7c7c; }
.mx1 { font: italic bold 15px/18px "Liberation Sans", sans-serif; color: #7c7c7c; }

.center { width: 1360px; padding-right: 2px; flex: none; display: flex; flex-direction: column; }
.phead { display: flex; align-items: center; gap: 13.5px; }
.phead span { white-space: nowrap; }
.vh { height: 20px; padding-left: 5px; margin-top: -1px; }
.vnav { width: 66px; height: 16px; margin-left: auto; margin-right: 1px; }
.vp { height: 731px; position: relative; border: 1px solid #b2b2b2; background: linear-gradient(90deg, rgba(0,0,0,.05) 193px, transparent 193px, transparent 1163px, rgba(0,0,0,.05) 1163px), linear-gradient(#8b8b8b, #5c5c5c); }
.scene { width: 1358px; height: 729px; display: block; }
.hud { position: absolute; left: 3px; top: 3px; height: 15px; padding: 0 2px; line-height: 15px; background: rgba(70,70,70,.35); color: #c4c4c4; border-radius: 2px; }
.stats { position: absolute; left: 3px; top: 31px; width: 81px; height: 38px; background: rgba(70,70,70,.35); color: #c4c4c4; border-radius: 2px; padding: 0 2px; }
.st-r { display: grid; grid-template-columns: 51px 1fr; height: 19px; line-height: 19px; }
.mini { position: absolute; left: 25px; top: 665px; width: 40px; height: 45px; }
.mt { font: 8px "Liberation Sans", sans-serif; }
.mg1 { fill: #7fc07f; } .mb1 { fill: #7f7fd0; } .mr1 { fill: #d05050; }
.grid-sp { position: absolute; right: 3px; bottom: 2px; height: 17px; padding: 0 3px; line-height: 17px; background: rgba(70,70,70,.4); color: #c4c4c4; border-radius: 2px; }

.tl { height: 27px; margin-top: 4px; display: flex; }
.ruler { width: 1283px; height: 24px; background: #333; border: 1px solid #2c2c2c; border-bottom-color: #555; border-radius: 3px; position: relative; flex: none; }
.mark { position: absolute; left: 1px; top: 0; width: 10px; height: 14px; background: #4bdc8e; }
.nums { display: flex; height: 13px; margin-left: -29px; line-height: 13px; position: relative; color: #a8a8a8; }
.nums span { width: 70.200px; text-align: center; flex: none; }
.nums .n0 { color: #47d889; padding-left: 18px; }
.ticks { height: 9px; margin: 0 11px 0 5px; background: repeating-linear-gradient(90deg, #bbb 0 1px, transparent 1px 14.040px) left bottom / 100% 4px no-repeat, repeating-linear-gradient(90deg, #ccc 0 1px, transparent 1px 70.200px) left top / 100% 100% no-repeat; border-top: 1px solid #444; }
.fld { height: 16px; background: #3b3b3b; border: 1px solid #333; border-bottom-color: #555; border-radius: 2px; display: flex; align-items: center; justify-content: space-between; padding: 0 3px 0 5px; color: #a0a0a0; line-height: 14px; }
.fld::after { content: ""; width: 5px; height: 10px; background: #9a9a9a; flex: none; clip-path: polygon(50% 0, 100% 40%, 0 40%, 50% 0, 50% 100%, 100% 60%, 0 60%, 50% 100%); }
.f60 { width: 61px; flex: none; }
.tlf { margin: 4px 0 0 5px; }
.f66 { width: 66px; height: 17px; flex: none; margin-top: 2px; }
.ctl { height: 26px; display: flex; margin-top: 1px; }
.slider { width: 698px; height: 17px; margin: 2px 6px 0 6px; flex: none; border-radius: 5px; background: linear-gradient(#7c7c7c, #555); border: 1px solid #333; display: flex; align-items: center; color: #444; }
.sl-l { width: 0; height: 0; border: 4px solid transparent; border-right: 6px solid #ccc; border-left: 0; margin-left: 6px; }
.s0 { margin-left: 7px; }
.s90 { margin-left: auto; color: #444; margin-right: 5px; }
.sl-r { width: 0; height: 0; border: 4px solid transparent; border-left: 6px solid #aaa; border-right: 0; margin-right: 5px; }
.tg { height: 26px; display: flex; border: 1px solid #2d2d2d; border-radius: 4px; overflow: hidden; background: #666; flex: none; }
.ml12 { margin-left: 12px; } .ml10 { margin-left: 10px; } .ml11 { margin-left: 11px; } .ml9 { margin-left: 9px; }
.tb { width: 27.600px; height: 100%; position: relative; border-right: 1px solid #555; flex: none; }
.s1 { width: 24px; }
.tb:last-child { border-right: 0; }
.tb svg { width: 100%; height: 100%; display: block; }
.bot { height: 115px; margin-top: 4px; display: flex; gap: 3px; }
.mat { width: 1057px; flex: none; border: 1px solid #5a5a5a; border-width: 1px 1px 1px 0; border-bottom-color: #333; }
.mh { height: 21px; padding-left: 5px; border-bottom: 1px solid #5f5f5f; }
.coord { flex: 1; border: 1px solid #5a5a5a; border-bottom-color: #333; }
.ch { height: 21px; padding-left: 5px; border-bottom: 1px solid #5f5f5f; gap: 0; }
.c-p { margin-left: 14px; width: 92px; } .c-s { width: 92px; }
.c-grid { display: grid; grid-template-columns: 14px 83px 15px 83px 16px 82px; grid-auto-rows: 20px; padding: 3px 0 0 1px; align-items: center; }
.c-grid .fld { height: 17px; }
.dd { height: 17px; display: flex; align-items: center; justify-content: space-between; padding: 0 5px 0 7px; border-radius: 4px; background: linear-gradient(#727272,#585858); border: 1px solid #333; color: #c4c4c4; line-height: 13px; white-space: nowrap; }
.dd.off { background: #555; color: #777; }
.dd.off .down { border-top-color: #777; }
.apply { height: 17px; border-radius: 8px; background: linear-gradient(#6c6c6c,#585858); border: 1px solid #333; text-align: center; line-height: 16px; color: #bbb; }
.status { flex: 1; margin-top: 4px; border-top: 1px solid #5a5a5a; }

.side { flex: 1; display: flex; min-width: 0; }
.side-main { width: 497px; flex: none; display: flex; flex-direction: column; padding-top: 4px; }
.om { height: 436px; display: flex; flex-direction: column; border-bottom: 1px solid #2f2f2f; }
.omh { height: 22px; padding: 0 0 2px 5px; background: #545454; border-top: 1px solid #5e5e5e; flex: none; }
.omi { width: 72px; height: 16px; margin-left: auto; margin-right: 3px; }
.om-body { flex: 1; display: flex; min-height: 0; padding-top: 2px; border-left: 1px solid #333; }
.list { width: 479px; overflow: hidden; flex: none; border-right: 1px solid #333; border-top: 1px solid #333; }
.row { height: 20px; display: flex; background: #484848; }
.row:nth-child(even) { background: #4d4d4d; }
.nc { width: 110px; flex: none; display: flex; align-items: center; border-right: 1px solid #2c2c2c; overflow: hidden; }
.tt { width: 60px; height: 20px; flex: none; }
.tw { width: 18px; height: 20px; flex: none; }
.ri { width: 14px; height: 18px; flex: none; }
.rr { margin: 0 3px 0 0; }
.nm { color: #ac7418; margin-left: -3px; }
.n1 { margin-left: -13px; }
.hi { color: #f2b530; }
.fc { width: 39px; height: 20px; border-right: 1px solid #2c2c2c; flex: none; }
.sbar { flex: 1; display: flex; flex-direction: column; align-items: center; padding: 2px 1px; }
.thumb { width: 9px; height: 144px; border-radius: 4px; background: linear-gradient(90deg, #666, #505050); margin-top: 1px; }
.up, .dn { width: 0; height: 0; border: 4px solid transparent; flex: none; }
.up { border-bottom: 7px solid #aaa; border-top: 0; margin-top: 2px; }
.dn { border-top: 7px solid #aaa; border-bottom: 0; margin-top: auto; margin-bottom: 2px; }

.am { flex: 1; margin-top: 5px; border-top: 1px solid #5e5e5e; }
.amh { height: 20px; padding-left: 5px; border-bottom: 1px solid #b87a20; }
.ami { width: 140px; height: 18px; margin-left: auto; margin-right: 4px; }
.am-title { height: 27px; display: flex; align-items: center; padding: 0 0 3px 8px; gap: 7px; }
.ra1 { width: 16px; height: 20px; }
.tabs { display: grid; grid-template-columns: repeat(6, 74px); grid-auto-rows: 17px; padding-left: 3px; text-align: center; line-height: 15px; }
.tabs b { background: linear-gradient(#727272,#5e5e5e); border: 1px solid #2d2d2d; border-left-width: 0; color: #b8b8b8; }
.tabs b:first-child { border-left-width: 1px; }
.tabs .act { background: #89a7d3; color: #111; border-left-width: 1px; }
.sect { height: 15px; margin: 6px 5px 0 2px; background: #333; line-height: 15px; padding-left: 2px; color: #b4b4b4; }
.cap { height: 16px; margin: 3px 0 2px; padding-left: 14px; color: #aaa; }
.ar { height: 19.700px; display: flex; align-items: center; padding-left: 4px; white-space: nowrap; }
.rad { width: 13px; height: 13px; border-radius: 50%; background: #5e5e5e; border: 2px solid #8c8c8c; flex: none; margin-right: 5px; box-shadow: inset 0 0 0 1px #333, 0 0 0 1px #333; }
.lb { width: 104px; flex: none; color: #aaa; overflow: hidden; }
.wide { width: 364px; height: 17px; flex: none; }
.f65 { width: 66px; height: 17px; flex: none; }
.dark { background: #2e2e2e; color: #b8b8b8; }
.dis .lb, .dis .fld { color: #696969; }
.dis .rad { background: #3a3a3a; border-color: #555; width: 9px; height: 9px; margin: 0 7px 0 2px; }
.sep { height: 0; border: 0; border-top: 1px solid #5f5f5f; margin: 4px 5px 0 2px; }

.rtabs { flex: 1; display: flex; flex-direction: column; padding-top: 4px; }
.rt-top { display: flex; flex-direction: column; height: 442px; }
.rt-bot { display: flex; flex-direction: column; }
.rt { writing-mode: vertical-rl; width: 19px; background: #3f3f3f; color: #7f7f7f; border-radius: 0 4px 4px 0; text-align: center; line-height: 19px; border-bottom: 1px solid #303030; }
.rt.act { background: #585858; color: #f29a1e; }
.h48 { height: 50px; } .h98 { height: 97px; } .h52 { height: 56px; } .h62 { height: 62px; } .h40 { height: 40px; }

.task { position: absolute; left: 0; bottom: 0; width: 160px; height: 28px; background: #ececec; display: flex; align-items: flex-start; padding-top: 4px; color: #333; }
.t-logo { width: 16px; height: 16px; margin: 2px 0 0 10px; }
.t-name { margin-left: 5px; font: 14px/20px "Open Sans", sans-serif; color: #2a2a2a; width: 26px; }
.t-i { width: 11px; height: 11px; margin-top: 2px; }
.t-res { margin-left: 5px; } .t-max { margin-left: 15px; }
.t-close { width: 45px; height: 21px; margin: -4px 0 0 15px; background: #c0c0c0; display: flex; align-items: center; justify-content: center; }
```
FILE: script.js
```js
(function () {
  var NS = 'http://www.w3.org/2000/svg';
  var svg = document.getElementById('scene');
  var OX = 41, OY = 109, CX = 725, CY = 705;
  function line(d, col, w, op) {
    var p = document.createElementNS(NS, 'path');
    p.setAttribute('d', d); p.setAttribute('fill', 'none');
    p.setAttribute('stroke', col); p.setAttribute('stroke-width', w);
    if (op) p.setAttribute('opacity', op);
    svg.appendChild(p);
  }
  function unit(a, b) { var dx = b[0] - a[0], dy = b[1] - a[1], l = Math.hypot(dx, dy) || 1; return [dx / l, dy / l]; }
  function dist(a, b) { return Math.hypot(a[0] - b[0], a[1] - b[1]); }
  function pol(p) { return [Math.hypot(p[0] - CX, p[1] - CY), Math.atan2(p[1] - CY, p[0] - CX)]; }
  function at(r, a) { return [CX + r * Math.cos(a), CY + r * Math.sin(a)]; }
  function limbTan(p) { var a = pol(p)[1]; return [-Math.sin(a), Math.cos(a)]; }
  function X(v) { return (590 + v / 3 - OX).toFixed(1); }
  function Y(v) { return (120 + v / 3 - OY).toFixed(1); }
  function pt(p) { return X(p[0]) + ' ' + Y(p[1]); }
  // Hermite chain: every knot has its own tangent
  function hermite(k, t, hs) {
    var s = 'M' + pt(k[0]);
    for (var i = 0; i < k.length - 1; i++) {
      var d = dist(k[i], k[i + 1]) * (hs || .36);
      s += 'C' + pt([k[i][0] + t[i][0] * d, k[i][1] + t[i][1] * d]) + ' ' +
        pt([k[i + 1][0] - t[i + 1][0] * d, k[i + 1][1] - t[i + 1][1] * d]) + ' ' + pt(k[i + 1]);
    }
    line(s, '#d2d2d2', 1, .92);
  }
  function smooth(k) {
    var t = k.map(function (p, i) { return unit(k[i - 1] || p, k[i + 1] || p); });
    hermite(k, t);
  }
  // apex strands: start, mids..., apex, tip
  [
    [[215,915],[118,560],[160,350],[250,225],[340,145]],
    [[217,890],[137,480],[190,300],[300,190],[408,102]],
    [[230,870],[172,480],[225,290],[350,160],[485,72]],
    [[245,850],[212,480],[270,280],[410,130],[565,52]],
    [[262,832],[255,480],[320,265],[470,115],[653,43]],
    [[282,818],[300,480],[375,250],[530,95],[743,45]],
    [[305,805],[350,480],[440,250],[600,85],[835,63]],
    [[328,797],[400,480],[500,250],[680,82],[925,93]],
    [[355,795],[455,480],[560,265],[760,100],[1012,135]],
    [[382,790],[505,480],[630,245],[840,128],[1093,188]],
    [[413,792],[550,480],[630,370],[905,163],[1170,253]],
    [[442,797],[630,495],[970,211],[1236,326]],
    [[472,808],[630,600],[1030,267],[1292,410]],
    [[500,822],[645,660],[1090,330],[1337,495]],
    [[527,838],[725,660],[1140,402],[1368,582]],
    [[553,858],[820,660],[1175,480],[1390,670]],
    [[577,882],[940,660],[1210,560],[1395,765]],
    [[598,907],[900,722],[1230,645],[1390,845]],
    [[617,933],[900,790],[1240,730],[1375,932]],
    [[633,960],[900,865],[1240,812],[1345,1010]],
    [[645,990],[900,930],[1220,892],[1305,1075]],
    [[652,1020],[900,985],[1160,967],[1300,1085]],
    [[657,1048],[900,1040],[1090,1033],[1250,1150]],
    [[657,1076],[900,1087],[1100,1108],[1205,1197]]
  ].forEach(function (k) {
    var n = k.length, T = k[n - 1], A = k[n - 2], t = [];
    k.forEach(function (p, i) {
      if (i === 0) t.push(unit(p, k[1]));
      else if (i === n - 1) t.push(limbTan(p));
      else if (i === n - 2) {
        // tangent at the apex: level on the right side, rising to the tip on the upper left
        var g = A[0] > 800 ? unit(k[n - 3], A) : unit(k[n - 3], T);
        t.push(A[0] > 800 ? unit([0, 0], [1, Math.max(0, g[1]) * .15]) : g);
      } else t.push(unit(k[i - 1], k[i + 1]));
    });
    var s = 'M' + pt(k[0]);
    for (var i = 0; i < n - 1; i++) {
      var d = dist(k[i], k[i + 1]), h1 = i === n - 2 ? .62 : .33, h2 = i === n - 2 ? .42 : .33;
      s += 'C' + pt([k[i][0] + t[i][0] * d * h1, k[i][1] + t[i][1] * d * h1]) + ' ' +
        pt([k[i + 1][0] - t[i + 1][0] * d * h2, k[i + 1][1] - t[i + 1][1] * d * h2]) + ' ' + pt(k[i + 1]);
    }
    line(s, '#d2d2d2', 1, .92);
  });
  // left side: rising along the left rim
  [
    [[218,940],[110,600],[100,470],[190,300],[290,190]],
    [[222,960],[100,680],[80,500],[130,380],[240,240]],
    [[228,975],[100,740],[65,600],[95,430],[190,300]],
    [[235,990],[120,820],[70,680],[75,520],[150,360]]
  ].forEach(smooth);
  // bottom strands: hairpin at the rim, tail running back clockwise
  [
    [[653,1103],[1195,1200]], [[638,1151],[1140,1250]], [[622,1173],[1085,1295]], [[607,1192],[1022,1325]],
    [[588,1205],[958,1350]], [[565,1217],[890,1365]], [[545,1228],[822,1375]], [[517,1233],[752,1377]],
    [[490,1218],[685,1372]], [[455,1200],[620,1358]], [[425,1180],[553,1340]], [[395,1157],[493,1318]],
    [[365,1132],[435,1290]], [[340,1110],[385,1258]], [[315,1082],[335,1222]], [[290,1055],[300,1188]],
    [[268,1028],[270,1150]], [[245,1000],[235,1100]]
  ].forEach(function (s) {
    var A = s[0], H = s[1], p = pol(H), rad = Math.PI / 180, left = H[0] < 600;
    var u = unit(A, H), e = dist(A, H);
    var k = [A, [A[0] + u[0] * e * .6, A[1] + u[1] * e * .6], H,
      at(p[0] * .97, p[1] + (left ? 9 : 6) * rad), at(p[0] * (left ? .94 : .945), p[1] + (left ? 22 : 14) * rad), at(p[0] * (left ? .93 : .925), p[1] + (left ? 38 : 21) * rad)];
    // the hairpin turns clockwise, so its apex tangent is the rim tangent
    var lim = limbTan(H), t = [u, u, [u[0] * .4 + lim[0] * .8, u[1] * .4 + lim[1] * .8]];
    t.push(unit(k[2], k[4])); t.push(unit(k[3], k[5])); t.push(unit(k[4], k[5]));
    hermite(k, t, .32);
  });
  var ox = 718.3 - OX, oy = 473.3 - OY;
  line('M' + ox + ' ' + oy + 'L' + ox + ' ' + (113 - OY), '#3f8f3f', 1);
  line('M' + (ox - 11) + ' ' + (125 - OY) + 'L' + ox + ' ' + (112 - OY) + 'L' + (ox + 11) + ' ' + (125 - OY), '#3f8f3f', 1);
  line('M' + ox + ' ' + oy + 'L' + (1075 - OX) + ' ' + (565.7 - OY), '#9a2a2a', 1);
  line('M' + (1063 - OX) + ' ' + (557 - OY) + 'L' + (1075 - OX) + ' ' + (565.7 - OY) + 'L' + (1062 - OX) + ' ' + (569 - OY), '#9a2a2a', 1);
  line('M' + ox + ' ' + oy + 'L' + (841.7 - OX) + ' ' + (350 - OY), '#35358f', 1);
  line('M' + (830 - OX) + ' ' + (349 - OY) + 'L' + (841.7 - OX) + ' ' + (349 - OY) + 'L' + (845 - OX) + ' ' + (353 - OY), '#35358f', 1);
})();
```
